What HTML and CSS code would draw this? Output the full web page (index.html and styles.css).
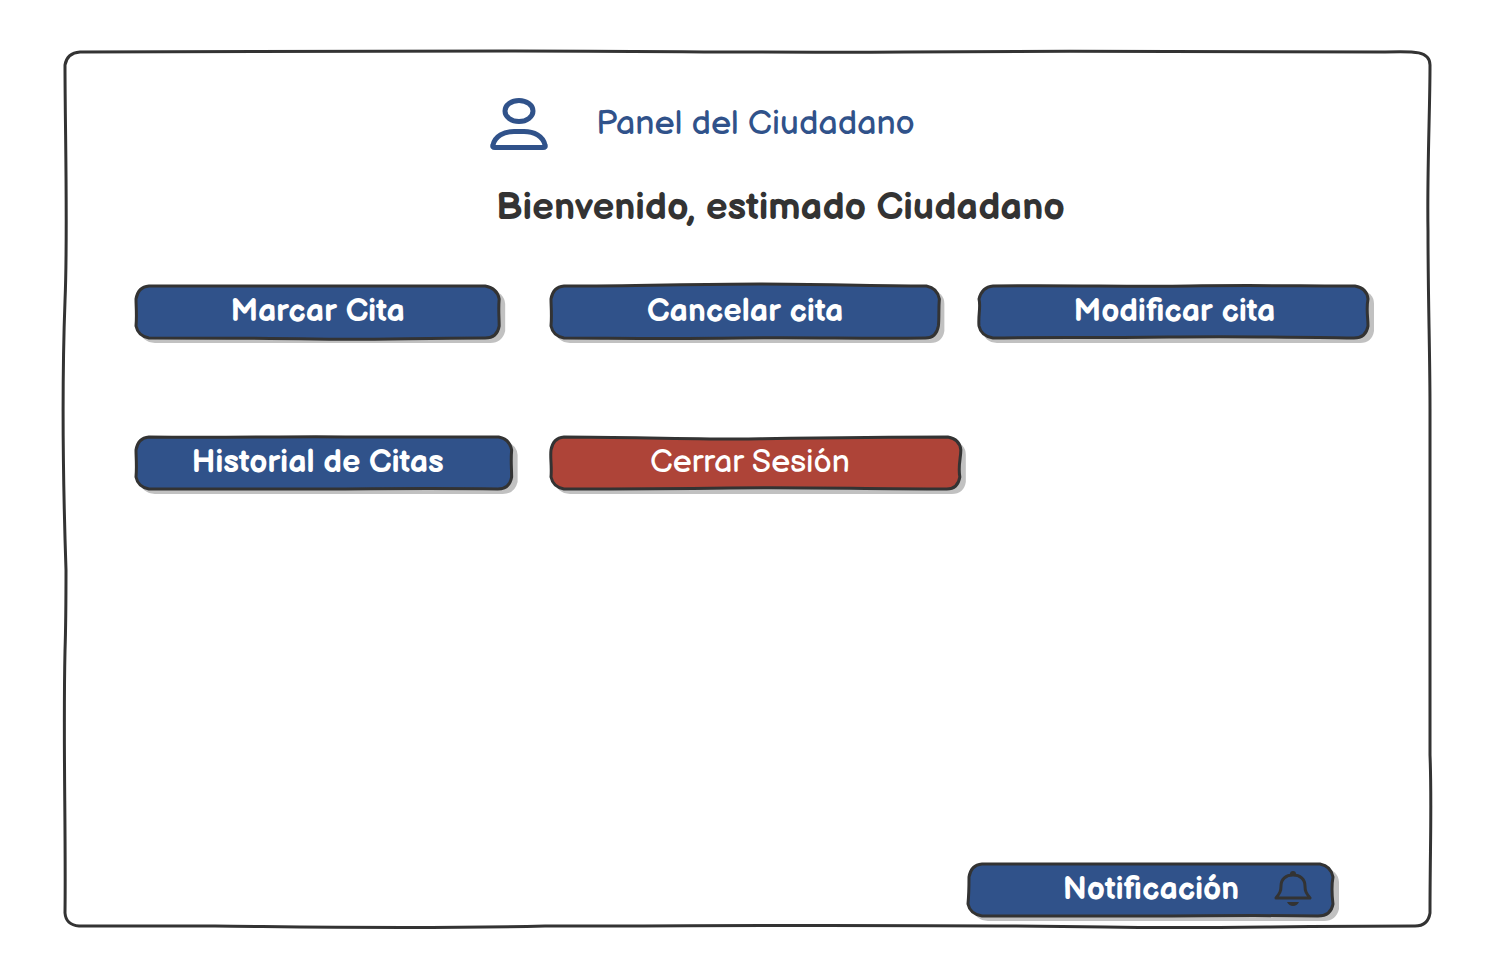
FILE: index.html
```html
<!DOCTYPE html>
<html lang="es">
<head>
<meta charset="utf-8">
<meta name="viewport" content="width=device-width, initial-scale=1">
<title>Panel del Ciudadano</title>
<link rel="stylesheet" href="styles.css">
</head>
<body>
<main class="panel">
  <svg class="panel-outline" viewBox="0 0 1366 876" preserveAspectRatio="none" aria-hidden="true">
    <path d="M15 1C150 1 300 0 450 0C600 0 700 2 840 1C1000 0 1180 0 1320 1C1350 0 1365 0 1365 14C1365 60 1362 120 1363 180C1363 250 1365 300 1365 358V704C1367 750 1365 800 1365 862Q1363 875 1350 875C1200 875 1150 878 1040 876C820 873 650 875 480 875C350 878 250 876 150 875H14Q1 874 0 862C1 780 -2 690 0 600C1 570 1 540 1 519C-2 430 -3 330 0 250C3 180 0 80 0 14Q2 2 15 1Z"/>
  </svg>

  <header class="panel-header">
    <svg class="user-icon" viewBox="0 0 58 52" aria-hidden="true">
      <ellipse cx="29" cy="13" rx="14" ry="10.5"/>
      <path d="M3 47C5 38 14 33.500 24 33.500H34C44 33.500 53 38 55 47Q56 49.500 53 49.500H5Q2 49.500 3 47Z"/>
    </svg>
    <p class="panel-name">Panel del Ciudadano</p>
  </header>

  <h1 class="welcome">Bienvenido, estimado Ciudadano</h1>

  <div class="actions">
    <button type="button" class="btn btn-book">
      <svg class="btn-shape" viewBox="0 0 366 54" preserveAspectRatio="none" aria-hidden="true">
        <path class="shade" d="M20 5H356Q370 7 371 19V46Q368 58 356 58H20Q7 57 5 46V18Q8 6 20 5Z"/>
        <path class="line" d="M14 1H351Q363 3 365 14C364 25 365 32 365 41Q363 53 351 53C280 53 240 55 180 54C110 53 60 53 14 53Q3 51 1 41C2 30 1 22 1 14Q3 2 14 1Z"/>
      </svg>
      <span class="btn-label">Marcar Cita</span>
    </button>
    <button type="button" class="btn btn-cancel">
      <svg class="btn-shape" viewBox="0 0 391 54" preserveAspectRatio="none" aria-hidden="true">
        <path class="shade" d="M20 5H381Q395 7 395 19V46Q393 58 381 58H20Q7 57 5 46V18Q8 6 20 5Z"/>
        <path class="line" d="M14 1C90 1 140 -1 210 -1C270 -1 320 1 377 1Q388 3 390 14C389 25 390 32 389 41Q387 53 376 53C310 54 260 52 190 53C110 54 60 53 14 53Q3 51 1 41C2 30 1 22 1 14Q3 2 14 1Z"/>
      </svg>
      <span class="btn-label">Cancelar cita</span>
    </button>
    <button type="button" class="btn btn-change">
      <svg class="btn-shape" viewBox="0 0 391 54" preserveAspectRatio="none" aria-hidden="true">
        <path class="shade" d="M20 5H381Q395 7 395 19V46Q393 58 381 58H18Q5 57 4 46V18Q8 6 20 5Z"/>
        <path class="line" d="M14 1C90 0 150 2 210 1C270 0 320 1 376 1Q388 3 389 14C387 25 389 32 389 41Q387 53 375 53C310 52 260 51 190 52C110 53 60 52 14 53Q2 51 0 41C-1 30 2 22 0 14Q3 2 14 1Z"/>
      </svg>
      <span class="btn-label">Modificar cita</span>
    </button>
    <button type="button" class="btn btn-history">
      <svg class="btn-shape" viewBox="0 0 380 54" preserveAspectRatio="none" aria-hidden="true">
        <path class="shade" d="M20 5H370Q384 7 385 19V46Q382 58 370 58H20Q7 57 5 46V18Q8 6 20 5Z"/>
        <path class="line" d="M14 1C100 2 160 0 220 1H366Q377 3 379 14C378 25 379 32 379 41Q377 53 365 53C290 52 240 53 180 53H14Q3 51 1 41C2 30 1 22 1 14Q3 2 14 1Z"/>
      </svg>
      <span class="btn-label">Historial de Citas</span>
    </button>
    <button type="button" class="btn btn-logout">
      <svg class="btn-shape" viewBox="0 0 413 54" preserveAspectRatio="none" aria-hidden="true">
        <path class="shade" d="M20 5H403Q417 7 417 19V46Q415 58 403 58H20Q7 57 5 46V18Q8 6 20 5Z"/>
        <path class="line" d="M14 1C80 1 120 3 190 3C260 2 320 1 399 1Q411 3 412 14C412 22 409 30 411 41Q409 53 398 53C310 53 260 51 180 52C110 53 60 53 14 53Q3 51 1 41C2 30 0 22 1 14Q3 2 14 1Z"/>
      </svg>
      <span class="btn-label">Cerrar Sesión</span>
    </button>
  </div>

  <footer class="panel-footer">
    <button type="button" class="btn btn-notify">
      <svg class="btn-shape" viewBox="0 0 366 54" preserveAspectRatio="none" aria-hidden="true">
        <path class="shade" d="M20 5H356Q370 7 371 19V46Q368 58 356 58H20Q7 57 5 46V18Q8 6 20 5Z"/>
        <path class="line" d="M14 1H352Q363 3 365 14C363 25 364 32 365 41Q363 53 350 53C280 52 240 53 180 53H14Q2 51 0 41C1 30 1 22 1 14Q3 2 14 1Z"/>
      </svg>
      <span class="btn-label">Notificación</span>
      <svg class="bell-icon" viewBox="0 0 38 36" aria-hidden="true">
        <path class="bell-body" d="M2 27C6 22 7 20 7 15C7 8 12 4 19 4S31 8 31 15C31 20 32 22 36 27Z"/>
        <path class="bell-fill" d="M16 4V3Q16 0 19 0T22 3V4ZM13 31H25Q23 35 19 35T13 31Z"/>
      </svg>
    </button>
  </footer>
</main>
</body>
</html>
```
FILE: styles.css
```css
:root {
  --ink: #333333;
  --blue: #30528a;
  --red: #ae4438;
  --shade: #c1c1c1;
}

* {
  box-sizing: border-box;
}

body {
  margin: 0;
  min-height: 100vh;
  display: flex;
  padding: 51px 71px 26px 65px;
  background: #ffffff;
  color: var(--ink);
  font-family: "Balsamiq Sans", "DejaVu Sans", sans-serif;
}

.panel {
  position: relative;
  flex: 1;
  display: flex;
  flex-direction: column;
  padding: 47px 61px 10px 70px;
}

.panel-outline {
  position: absolute;
  inset: 0;
  width: 100%;
  height: 100%;
  overflow: visible;
  pointer-events: none;
}

.panel-outline path {
  fill: none;
  stroke: var(--ink);
  stroke-width: 3;
  vector-effect: non-scaling-stroke;
}

.panel-header {
  display: flex;
  align-items: center;
  justify-content: center;
  gap: 48px;
  padding-right: 100px;
}

.user-icon {
  width: 58px;
  height: 52px;
  fill: none;
  stroke: var(--blue);
  stroke-width: 5;
}

.panel-name {
  margin: 0;
  color: var(--blue);
  font-size: 34px;
  line-height: 52px;
}

.welcome {
  margin: 36px 0 0;
  padding-left: 56px;
  font-size: 38px;
  line-height: 44px;
  text-align: center;
}

.actions {
  display: grid;
  grid-template-columns: 415fr 429fr 391fr;
  row-gap: 97px;
  margin-top: 55px;
}

.btn {
  position: relative;
  height: 54px;
  padding: 0;
  border: 0;
  background: transparent;
  color: #ffffff;
  font: bold 32px/52px "Balsamiq Sans", "DejaVu Sans", sans-serif;
  cursor: pointer;
}

.btn-shape {
  position: absolute;
  inset: 0;
  width: 100%;
  height: 100%;
  overflow: visible;
}

.btn-shape .shade {
  fill: var(--shade);
}

.btn-shape .line {
  fill: var(--blue);
  stroke: var(--ink);
  stroke-width: 3;
  vector-effect: non-scaling-stroke;
}

.btn-label {
  position: relative;
}

.btn-book {
  width: 88%;
}

.btn-cancel {
  width: 91%;
}

.btn-history {
  width: 91%;
  padding-right: 12px;
}

.btn-logout {
  width: 96%;
  padding-right: 12px;
  font-weight: normal;
}

.btn-logout .line {
  fill: var(--red);
}

.panel-footer {
  display: flex;
  justify-content: flex-end;
  margin-top: auto;
  padding-right: 36px;
}

.btn-notify {
  width: 366px;
}

.bell-icon {
  position: absolute;
  top: 8px;
  right: 22px;
  width: 38px;
  height: 36px;
}

.bell-body {
  fill: none;
  stroke: var(--ink);
  stroke-width: 3;
  stroke-linejoin: round;
}

.bell-fill {
  fill: var(--ink);
}
```
